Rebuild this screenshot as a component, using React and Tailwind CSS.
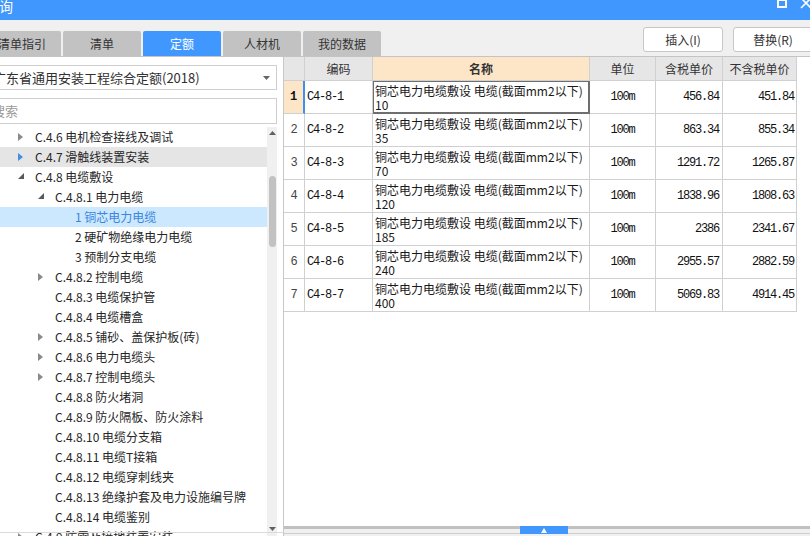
import React from 'react';

const tree = [
  { l: 1, t: 'c', text: 'C.4.6 电机检查接线及调试' },
  { l: 1, t: 'c', text: 'C.4.7 滑触线装置安装', hover: true },
  { l: 1, t: 'e', text: 'C.4.8 电缆敷设' },
  { l: 2, t: 'e', text: 'C.4.8.1 电力电缆' },
  { l: 3, text: '1 铜芯电力电缆', sel: true },
  { l: 3, text: '2 硬矿物绝缘电力电缆' },
  { l: 3, text: '3 预制分支电缆' },
  { l: 2, t: 'c', text: 'C.4.8.2 控制电缆' },
  { l: 2, text: 'C.4.8.3 电缆保护管' },
  { l: 2, text: 'C.4.8.4 电缆槽盒' },
  { l: 2, t: 'c', text: 'C.4.8.5 铺砂、盖保护板(砖)' },
  { l: 2, t: 'c', text: 'C.4.8.6 电力电缆头' },
  { l: 2, t: 'c', text: 'C.4.8.7 控制电缆头' },
  { l: 2, text: 'C.4.8.8 防火堵洞' },
  { l: 2, text: 'C.4.8.9 防火隔板、防火涂料' },
  { l: 2, text: 'C.4.8.10 电缆分支箱' },
  { l: 2, text: 'C.4.8.11 电缆T接箱' },
  { l: 2, text: 'C.4.8.12 电缆穿刺线夹' },
  { l: 2, text: 'C.4.8.13 绝缘护套及电力设施编号牌' },
  { l: 2, text: 'C.4.8.14 电缆鉴别' },
  { l: 1, t: 'c', text: 'C.4.9 防雷及接地装置安装' },
];

const rows = [
  ['C4-8-1', '10', '456.84', '451.84'],
  ['C4-8-2', '35', '863.34', '855.34'],
  ['C4-8-3', '70', '1291.72', '1265.87'],
  ['C4-8-4', '120', '1838.96', '1808.63'],
  ['C4-8-5', '185', '2386', '2341.67'],
  ['C4-8-6', '240', '2955.57', '2882.59'],
  ['C4-8-7', '400', '5069.83', '4914.45'],
];

function Caret({ type, blue }) {
  if (type === 'c')
    return (
      <svg width="5" height="8" viewBox="0 0 5 8" className="ml-[1px]">
        <path d="M0 0L5 4L0 8Z" fill={blue ? '#3d8fe8' : '#8a8a8a'} />
      </svg>
    );
  if (type === 'e')
    return (
      <svg width="6" height="6" viewBox="0 0 6 6" className="ml-[1px] -mt-[2px]">
        <path d="M6 0L6 6L0 6Z" fill="#595959" />
      </svg>
    );
  return null;
}

function TreeRow({ r }) {
  const pad = r.l === 1 ? 'pl-[27px]' : r.l === 2 ? 'pl-[47px]' : 'pl-[67px]';
  const bg = r.sel
    ? 'bg-[#cce8ff] text-[#3a86dc]'
    : r.hover
    ? 'bg-[#e5e5e5] text-[#262626]'
    : 'text-[#262626]';
  return (
    <div className={`h-[20px] shrink-0 flex items-center whitespace-nowrap ${pad} ${bg}`}>
      <div className="w-[18px] shrink-0 flex items-center">
        <Caret type={r.t} blue={r.hover} />
      </div>
      <span className="leading-[20px]">{r.text}</span>
    </div>
  );
}

const mono = "font-['Liberation_Mono',monospace] text-[12px] tracking-[-1.2px] text-[#111]";

export default function App() {
  return (
    <div className="w-[810px] h-[536px] overflow-hidden bg-[#f0f0f0] flex flex-col font-['Noto_Sans_CJK_SC',sans-serif] text-[12px] text-[#333]">
      {/* title bar */}
      <div className="h-[20px] shrink-0 bg-[#4098ff] flex items-start">
        <span className="text-white text-[14px] leading-[14px] -mt-[1px] -ml-[1px]">询</span>
        <div className="ml-auto flex items-start gap-[13px] -mr-[2px]">
          <div className="w-[10px] h-[10px] border-2 border-t-[3px] border-white -mt-[2px]" />
          <svg width="12" height="12" viewBox="0 0 12 12" className="-mt-[3px]">
            <path d="M1 1L11 11M11 1L1 11" stroke="white" strokeWidth="1.6" />
          </svg>
        </div>
      </div>

      {/* toolbar */}
      <div className="h-[37px] shrink-0 border-b border-[#c4c4c4] flex items-start">
        <div className="mt-[11px] -ml-[17px] flex gap-[2px]">
          {['清单指引', '清单', '定额', '人材机', '我的数据'].map((t) => (
            <div
              key={t}
              className={`w-[78px] h-[25px] rounded-t-[2px] flex items-center justify-center text-[12px] ${
                t === '定额' ? 'bg-[#4098ff] text-white' : 'bg-[#c2c2c2] text-[#333]'
              }`}
            >
              {t}
            </div>
          ))}
        </div>
        <div className="ml-auto mt-[7px] flex gap-[10px] -mr-[3px]">
          {['插入(I)', '替换(R)'].map((t) => (
            <div
              key={t}
              className="w-[80px] h-[25px] bg-white border border-[#c6c6c6] rounded-[3px] flex items-center justify-center text-[12px] text-[#333]"
            >
              {t}
            </div>
          ))}
        </div>
      </div>

      {/* main */}
      <div className="flex flex-1 min-h-0">
        {/* left panel */}
        <div className="w-[293px] -ml-[10px] shrink-0 bg-white flex flex-col">
          <div className="mt-[8px] ml-[4px] w-[283px] h-[25px] shrink-0 border border-[#cfcfcf] flex items-center justify-between pr-[6px] text-[13px] text-[#303030]">
            <span className="whitespace-nowrap -ml-[2px]">广东省通用安装工程综合定额(2018)</span>
            <svg width="7" height="4" viewBox="0 0 7 4">
              <path d="M0 0H7L3.5 4Z" fill="#666" />
            </svg>
          </div>
          <div className="mt-[8px] ml-[4px] w-[283px] h-[26px] shrink-0 border border-[#cfcfcf] flex items-center text-[13px] text-[#9a9a9a]">
            <span className="-ml-[3px]">搜索</span>
          </div>
          <div className="mt-[3px] flex-1 min-h-0 flex relative overflow-hidden">
            <div className="w-[277px] shrink-0 flex flex-col">
              {tree.map((r, i) => (
                <TreeRow key={i} r={r} />
              ))}
            </div>
            <div className="w-[10px] shrink-0 bg-[#f0f0f0] flex flex-col items-center">
              <svg width="7" height="4" viewBox="0 0 7 4" className="mt-[4px]">
                <path d="M3.5 0L7 4H0Z" fill="#606060" />
              </svg>
              <div className="mt-[41px] w-[7px] h-[71px] rounded-full bg-[#c2c2c2]" />
              <svg width="7" height="4" viewBox="0 0 7 4" className="mt-auto mb-[5px]">
                <path d="M0 0H7L3.5 4Z" fill="#606060" />
              </svg>
            </div>
            <div className="flex-1" />
            <div className="absolute left-0 right-0 top-[405px] h-px bg-[#dadada]" />
          </div>
        </div>

        {/* right panel */}
        <div className="flex-1 min-w-0 border-l border-[#c8c8c8] bg-white flex flex-col">
          <div className="flex-1 min-h-0 overflow-hidden flex flex-col">
            {/* header */}
            <div className="flex h-[24px] shrink-0 text-[12px] text-[#333]">
              <div className="w-[21px] bg-[#e6e6e6] border-r border-b border-[#d0d0d0]" />
              <div className="w-[68px] bg-[#e6e6e6] border-r border-b border-[#d0d0d0] flex items-center justify-center">编码</div>
              <div className="w-[217px] bg-[#fde6c8] border-r border-b border-[#d0d0d0] flex items-center justify-center font-bold">名称</div>
              <div className="w-[66px] bg-[#e6e6e6] border-r border-b border-[#d0d0d0] flex items-center justify-center">单位</div>
              <div className="w-[67px] bg-[#e6e6e6] border-r border-b border-[#d0d0d0] flex items-center justify-center">含税单价</div>
              <div className="w-[74px] bg-[#e6e6e6] border-r border-b border-[#d0d0d0] flex items-center justify-center">不含税单价</div>
            </div>
            {rows.map((r, i) => {
              const first = i === 0;
              return (
                <div key={i} className="flex h-[33px] shrink-0">
                  <div
                    className={`w-[21px] border-b border-[#d0d0d0] flex items-center justify-center font-['Liberation_Mono',monospace] text-[12px] ${
                      first
                        ? 'bg-[#fde6c8] border-r-2 border-r-[#3f8ff0] font-bold text-[#111]'
                        : 'border-r text-[#444]'
                    }`}
                  >
                    {i + 1}
                  </div>
                  <div className={`w-[68px] border-r border-b border-[#d0d0d0] flex items-center pl-[2px] ${mono}`}>{r[0]}</div>
                  <div
                    className={`w-[217px] text-[12px] leading-[14px] text-[#1a1a1a] whitespace-nowrap overflow-hidden ${
                      first
                        ? 'border-l border-t border-r-2 border-b-2 border-[#6e6e6e] pt-[2px] pl-[1px]'
                        : 'border-r border-b border-[#d0d0d0] pt-[3px] pl-[2px]'
                    }`}
                  >
                    <div>铜芯电力电缆敷设 电缆(截面mm2以下)</div>
                    <div>{r[1]}</div>
                  </div>
                  <div className={`w-[66px] border-r border-b border-[#d0d0d0] flex items-center justify-center ${mono}`}>100m</div>
                  <div className={`w-[67px] border-r border-b border-[#d0d0d0] flex items-center justify-end pr-[3px] ${mono}`}>{r[2]}</div>
                  <div className={`w-[74px] border-r border-b border-[#d0d0d0] flex items-center justify-end pr-[2px] ${mono}`}>{r[3]}</div>
                </div>
              );
            })}
          </div>
          <div className="h-[10px] shrink-0 bg-[#f0f0f0] relative">
            <div className="h-[3px] bg-[#c0c0c0]" />
            <div className="absolute left-0 right-0 bottom-[2px] h-px bg-[#cfcfcf]" />
            <div className="absolute left-[236px] top-0 w-[48px] h-[8px] bg-[#4098ff] flex items-center justify-center">
              <svg width="6" height="5" viewBox="0 0 6 5">
                <path d="M3 0L6 5H0Z" fill="white" />
              </svg>
            </div>
          </div>
        </div>
      </div>
    </div>
  );
}
